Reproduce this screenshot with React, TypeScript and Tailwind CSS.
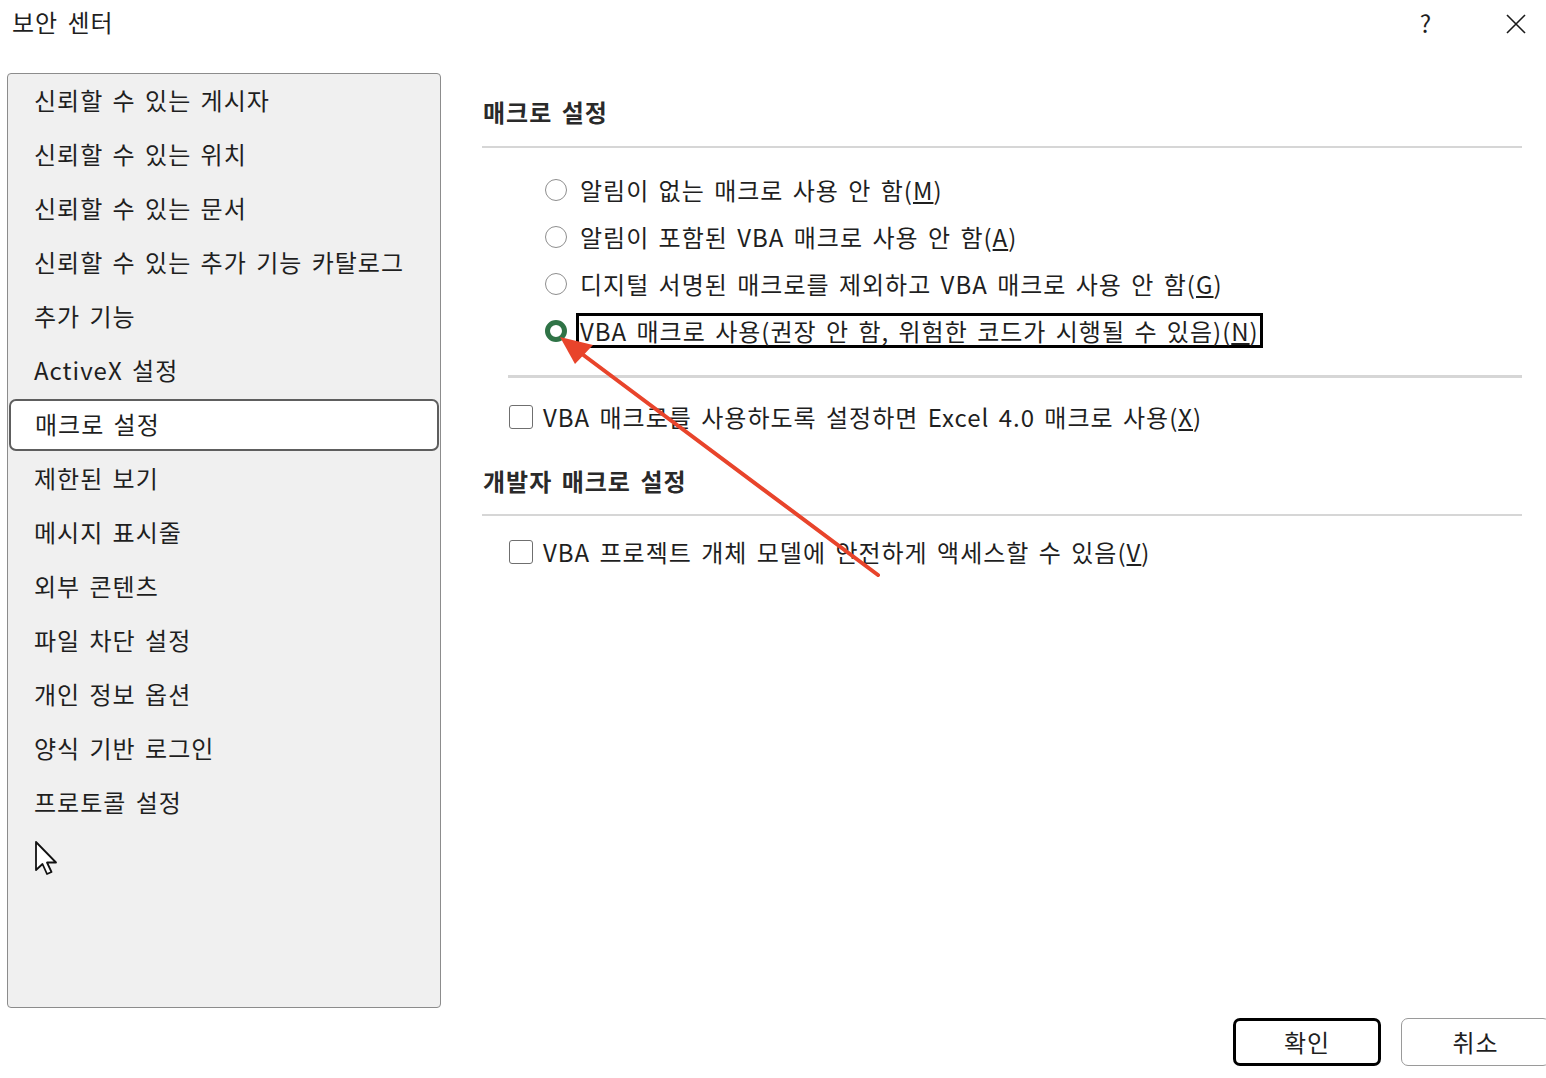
import React from "react";

const navItems = [
  "신뢰할 수 있는 게시자",
  "신뢰할 수 있는 위치",
  "신뢰할 수 있는 문서",
  "신뢰할 수 있는 추가 기능 카탈로그",
  "추가 기능",
  "ActiveX 설정",
  "매크로 설정",
  "제한된 보기",
  "메시지 표시줄",
  "외부 콘텐츠",
  "파일 차단 설정",
  "개인 정보 옵션",
  "양식 기반 로그인",
  "프로토콜 설정",
];

const macroOptions = [
  { label: "알림이 없는 매크로 사용 안 함", key: "M" },
  { label: "알림이 포함된 VBA 매크로 사용 안 함", key: "A" },
  { label: "디지털 서명된 매크로를 제외하고 VBA 매크로 사용 안 함", key: "G" },
  { label: "VBA 매크로 사용(권장 안 함, 위험한 코드가 시행될 수 있음)", key: "N" },
];

const Radio = ({ checked }: { checked?: boolean }) =>
  checked ? (
    <span className="w-[22px] h-[22px] rounded-full border-[5px] border-[#2f7346] bg-white shrink-0" />
  ) : (
    <span className="w-[22px] h-[22px] rounded-full border border-[#8e8e8e] bg-white shrink-0" />
  );

const Checkbox = () => (
  <span className="w-[24px] h-[24px] rounded-[3px] border border-[#6f6f6f] bg-white shrink-0" />
);

export default function App() {
  const selected = 3;
  return (
    <div
      className="w-[1546px] h-[1078px] bg-white relative overflow-hidden text-[#1f1f1f] text-[24px] tracking-[1px] [word-spacing:3px]"
      style={{ fontFamily: '"Noto Sans CJK KR", "Noto Sans", sans-serif' }}
    >
      {/* Title bar */}
      <div className="h-[73px] flex items-start">
        <div className="pl-[12px] pt-[5px] leading-[34px]">보안 센터</div>
        <div className="ml-auto flex items-start pt-[6px]">
          <span className="leading-[34px] text-[24px] w-[20px] text-center">?</span>
          <svg className="ml-[70px] mr-[20px] mt-[8px]" width="20" height="20" viewBox="0 0 20 20">
            <path d="M1 1 L19 19 M19 1 L1 19" stroke="#1a1a1a" strokeWidth="1.6" />
          </svg>
        </div>
      </div>

      <div className="flex">
        {/* Sidebar */}
        <div className="ml-[7px] w-[434px] h-[935px] bg-[#f0f0f0] border border-[#8c8c8c] rounded-[4px] relative">
          {navItems.map((item, i) =>
            item === "매크로 설정" ? (
              <div
                key={i}
                className="h-[52px] mx-[1px] my-[1px] flex items-center pl-[24px] pb-[3px] bg-white border-2 border-[#5e5e5e] rounded-[7px]"
              >
                {item}
              </div>
            ) : (
              <div key={i} className="h-[54px] flex items-center pl-[26px] pb-[3px]">
                {item}
              </div>
            )
          )}
          {/* mouse pointer */}
          <svg className="absolute left-[26px] top-[766px]" width="28" height="38" viewBox="0 0 28 38">
            <path
              d="M2 2 L2 30 L8.5 24 L13 34 L17.5 32 L13 22.5 L22 22.5 Z"
              fill="white"
              stroke="#111"
              strokeWidth="1.8"
              strokeLinejoin="round"
            />
          </svg>
        </div>

        {/* Content */}
        <div className="ml-[41px] w-[1040px] flex flex-col">
          <div className="mt-[23px] h-[34px] flex items-center pl-[1px] pb-[2px] font-semibold text-[#2a2a2a]">
            매크로 설정
          </div>
          <div className="mt-[16px] h-[2px] bg-[#d6d6d6]" />

          <div className="mt-[18px] flex flex-col">
            {macroOptions.map((o, i) => (
              <div key={i} className="h-[47px] flex items-center pl-[63px]">
                <Radio checked={i === selected} />
                <span
                  className={
                    "ml-[9px] px-[1px] leading-[29px] border-[3px] " +
                    (i === selected ? "border-black" : "border-transparent")
                  }
                >
                  {o.label}(<u>{o.key}</u>)
                </span>
              </div>
            ))}
          </div>

          <div className="mt-[21px] ml-[26px] h-[3px] bg-[#d6d6d6]" />

          <div className="mt-[15px] h-[47px] flex items-center pl-[27px]">
            <Checkbox />
            <span className="ml-[10px]">
              VBA 매크로를 사용하도록 설정하면 Excel 4.0 매크로 사용(<u>X</u>)
            </span>
          </div>

          <div className="mt-[25px] h-[34px] flex items-center pl-[1px] pb-[2px] font-semibold text-[#2a2a2a]">
            개발자 매크로 설정
          </div>
          <div className="mt-[15px] h-[2px] bg-[#d6d6d6]" />

          <div className="mt-[12px] h-[47px] flex items-center pl-[27px]">
            <Checkbox />
            <span className="ml-[10px]">
              VBA 프로젝트 개체 모델에 안전하게 액세스할 수 있음(<u>V</u>)
            </span>
          </div>
        </div>
      </div>

      {/* Footer buttons */}
      <div className="mt-[10px] flex justify-end gap-[20px] mr-[-4px]">
        <button className="w-[148px] h-[48px] border-[3px] border-black rounded-[7px] bg-white flex items-center justify-center">
          확인
        </button>
        <button className="w-[149px] h-[48px] border border-[#9a9a9a] rounded-[7px] bg-white flex items-center justify-center">
          취소
        </button>
      </div>

      {/* Red annotation arrow */}
      <svg className="absolute left-0 top-0 pointer-events-none" width="1546" height="1078">
        <line x1="878" y1="575" x2="578" y2="351" stroke="#e8442b" strokeWidth="4" strokeLinecap="round" />
        <polygon points="560,337 593,345 575,364" fill="#e8442b" />
      </svg>
    </div>
  );
}
